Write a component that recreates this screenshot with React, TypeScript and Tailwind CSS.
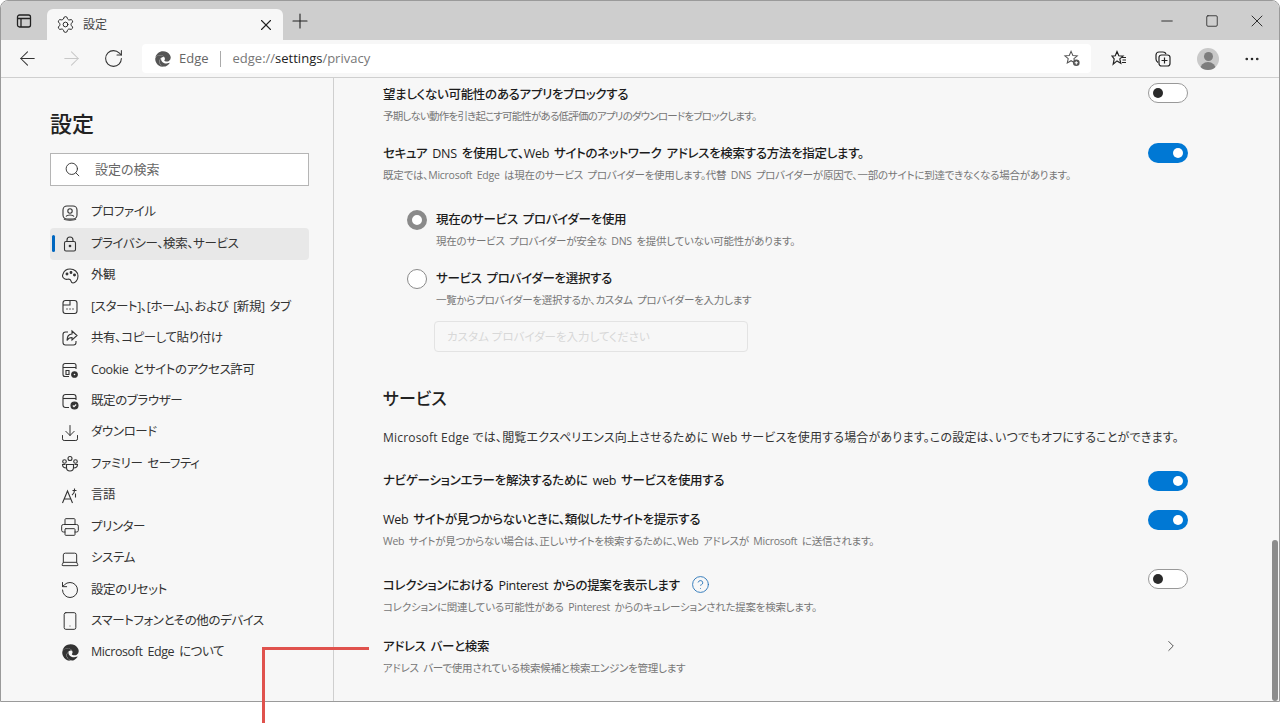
import type { ReactNode } from "react";
import {
  ArrowLeft,
  ArrowRight,
  ChevronRight,
  CircleHelp,
  Download,
  Laptop,
  Minus,
  MoreHorizontal,
  Plus,
  Printer,
  RotateCcw,
  RotateCw,
  Search,
  Settings,
  Smartphone,
  Square,
  X,
} from "lucide-react";
import { FaEdge } from "react-icons/fa";

const icon = "w-5 h-5 text-[#333]";

function Svg({ children, className = icon }: { children: ReactNode; className?: string }) {
  return (
    <svg viewBox="0 0 20 20" fill="none" stroke="currentColor" strokeWidth="1.1" className={className}>
      {children}
    </svg>
  );
}

const navItems: { label: string; icon: ReactNode; active?: boolean }[] = [
  {
    label: "プロファイル",
    icon: (
      <Svg>
        <rect x="3" y="3" width="14" height="13" rx="4" />
        <circle cx="10" cy="8" r="2.2" />
        <path d="M6 13.500c1-2 7-2 8 0M4 16c1 1.500 11 1.500 12 0" />
      </Svg>
    ),
  },
  {
    label: "プライバシー、検索、サービス",
    active: true,
    icon: (
      <Svg>
        <rect x="4.500" y="7.500" width="11" height="9.500" rx="1.500" />
        <path d="M7 7.500V6a3 3 0 0 1 6 0v1.500" />
        <circle cx="10" cy="12" r="0.8" fill="currentColor" />
      </Svg>
    ),
  },
  {
    label: "外観",
    icon: (
      <Svg>
        <path d="M10 3c4.500 0 8 3 8 7 0 4.500-3 7-5 7-2.500 0-1.500-2.500-3-3.500-1.500-1-3 .5-5-.5-2-1-3-3-2-5 1-3 4-5 7-5z" />
        <circle cx="7" cy="8" r="0.9" fill="currentColor" />
        <circle cx="11" cy="6.500" r="0.9" fill="currentColor" />
        <circle cx="14.500" cy="9" r="0.9" fill="currentColor" />
      </Svg>
    ),
  },
  {
    label: "[スタート]、[ホーム]、および [新規] タブ",
    icon: (
      <Svg>
        <rect x="3" y="3.500" width="14" height="13" rx="2.500" />
        <path d="M3 8h7V3.500" />
        <path d="M6.500 12h1M9.500 12h1M12.500 12h1" strokeWidth="1.400" />
      </Svg>
    ),
  },
  {
    label: "共有、コピーして貼り付け",
    icon: (
      <Svg>
        <path d="M8 4H5.500A2.500 2.500 0 0 0 3 6.500v8A2.500 2.500 0 0 0 5.500 17h8a2.500 2.500 0 0 0 2.500-2.500V13" />
        <path d="M12 3l5 4.500-5 4.500V9.500c-2.500 0-4 1-5 3 0-4 2-6.500 5-6.500z" />
      </Svg>
    ),
  },
  {
    label: "Cookie とサイトのアクセス許可",
    icon: (
      <Svg>
        <path d="M9 16.500H5A2 2 0 0 1 3 14.500v-9A2 2 0 0 1 5 3.500h9a2 2 0 0 1 2 2V9" />
        <path d="M3 7.500h13M6 10.500h3v4H6z" />
        <circle cx="14.500" cy="14.500" r="2.800" fill="currentColor" />
        <circle cx="14.500" cy="14.500" r="0.800" fill="#f7f7f7" stroke="none" />
      </Svg>
    ),
  },
  {
    label: "既定のブラウザー",
    icon: (
      <Svg>
        <path d="M9 16.500H5.500A2.500 2.500 0 0 1 3 14V6a2.500 2.500 0 0 1 2.500-2.500h8A2.500 2.500 0 0 1 16 6v3" />
        <path d="M3 7.500h13" />
        <circle cx="14.500" cy="14.500" r="3.500" fill="currentColor" />
        <path d="M12.800 14.500l1.200 1.200 2.200-2.200" stroke="#f7f7f7" />
      </Svg>
    ),
  },
  { label: "ダウンロード", icon: <Download className={icon} strokeWidth={1.2} /> },
  {
    label: "ファミリー セーフティ",
    icon: (
      <Svg>
        <circle cx="10" cy="4.500" r="2" />
        <circle cx="4.500" cy="7.500" r="1.800" />
        <circle cx="15.500" cy="7.500" r="1.800" />
        <path d="M6.500 10.500h7v3a3.500 3.500 0 0 1-7 0z" />
        <path d="M5.500 10.500H2.500c0 2 1 3.500 4 3.500M14.500 10.500h3c0 2-1 3.500-4 3.500" />
      </Svg>
    ),
  },
  {
    label: "言語",
    icon: (
      <Svg>
        <path d="M2.500 17L7.500 5l5 12M4.300 13h6.400" />
        <path d="M12.500 4.500h4M14.500 2.500v2c0 2-1 3.500-2.500 4.500M15.500 7.500v4" />
      </Svg>
    ),
  },
  { label: "プリンター", icon: <Printer className={icon} strokeWidth={1.2} /> },
  { label: "システム", icon: <Laptop className={icon} strokeWidth={1.2} /> },
  { label: "設定のリセット", icon: <RotateCcw className={icon} strokeWidth={1.2} /> },
  { label: "スマートフォンとその他のデバイス", icon: <Smartphone className={icon} strokeWidth={1.2} /> },
  { label: "Microsoft Edge について", icon: <FaEdge className="w-[17px] h-[17px] text-[#333]" /> },
];

function Toggle({ on, className = "" }: { on?: boolean; className?: string }) {
  if (on) {
    return (
      <div className={`w-10 h-5 rounded-full bg-[#0078d4] flex items-center justify-end pr-[5px] shrink-0 ${className}`}>
        <div className="w-[10px] h-[10px] rounded-full bg-white" />
      </div>
    );
  }
  return (
    <div className={`w-10 h-5 rounded-full bg-white border border-[#999] flex items-center pl-1 shrink-0 ${className}`}>
      <div className="w-[10px] h-[10px] rounded-full bg-[#2a2a2a]" />
    </div>
  );
}

function Title({ children }: { children: ReactNode }) {
  return (
    <div className="text-[12.5px] leading-5 tracking-[-0.3px] [word-spacing:2px] font-medium text-[#1c1c1c] whitespace-nowrap">
      {children}
    </div>
  );
}

function Desc({ children }: { children: ReactNode }) {
  return (
    <div className="text-[10.5px] leading-4 tracking-[-0.25px] [word-spacing:2px] text-[#767676] whitespace-nowrap">
      {children}
    </div>
  );
}

function Row({ title, desc, right, className }: { title: ReactNode; desc?: ReactNode; right?: ReactNode; className: string }) {
  return (
    <div className={`flex justify-between pr-[91px] ${className}`}>
      <div className="flex flex-col gap-[3px] min-w-0">
        <Title>{title}</Title>
        {desc && <Desc>{desc}</Desc>}
      </div>
      {right}
    </div>
  );
}

export default function App() {
  return (
    <div className="relative w-[1280px] h-[723px] overflow-hidden bg-white font-['Open_Sans','Noto_Sans_CJK_JP',sans-serif] [font-feature-settings:'palt']">
      <div className="h-[702px] flex flex-col rounded-t-lg border border-[#9a9a9a] overflow-hidden bg-[#f7f7f7]">
        {/* tab strip */}
        <div className="h-[39px] shrink-0 bg-[#cecece] flex items-end">
          <div className="w-[46px] h-full flex items-center justify-center">
            <svg viewBox="0 0 16 16" fill="none" stroke="#222" strokeWidth="1.300" className="w-4 h-4">
              <rect x="1.500" y="2" width="13" height="12" rx="2" />
              <path d="M1.500 5.500h13M5 5.500V14" />
            </svg>
          </div>
          <div className="w-[236px] h-[31px] bg-[#f7f7f7] rounded-t-md flex items-center pl-[9px] pr-[8px]">
            <Settings className="w-[19px] h-[19px] text-[#222]" strokeWidth={1.200} />
            <span className="ml-[8px] text-xs text-[#444]">設定</span>
            <X className="ml-auto w-[18px] h-[18px] text-[#222]" strokeWidth={1.500} />
          </div>
          <div className="w-[34px] h-full flex items-center justify-center">
            <Plus className="w-6 h-6 text-[#222]" strokeWidth={1.100} />
          </div>
          <div className="ml-auto h-full flex items-center">
            <div className="w-[45px] flex justify-center">
              <Minus className="w-[18px] h-[18px] text-[#222]" strokeWidth={1.200} />
            </div>
            <div className="w-[45px] flex justify-center">
              <Square className="w-[14px] h-[14px] text-[#222]" strokeWidth={1.400} />
            </div>
            <div className="w-[45px] flex justify-center">
              <X className="w-5 h-5 text-[#222]" strokeWidth={1.100} />
            </div>
          </div>
        </div>

        {/* toolbar */}
        <div className="h-[38px] shrink-0 bg-[#f7f7f7] border-b border-[#cfcfcf] flex items-center">
          <div className="w-[141px] flex items-center justify-between pl-[15px] pr-[18px] shrink-0">
            <ArrowLeft className="w-[23px] h-[23px] text-[#333]" strokeWidth={1.100} />
            <ArrowRight className="w-[23px] h-[23px] text-[#c8c8c8]" strokeWidth={1.100} />
            <RotateCw className="w-[21px] h-[21px] text-[#333]" strokeWidth={1.200} />
          </div>
          <div className="w-[949px] h-[29px] rounded bg-white flex items-center pl-[13px] pr-[9px] shrink-0">
            <FaEdge className="w-4 h-4 text-[#555]" />
            <span className="ml-2 text-[13px] text-[#666]">Edge</span>
            <span className="ml-[11px] mr-[12px] w-px h-4 bg-[#aaa]" />
            <span className="text-[13px] text-[#777]">
              edge://<span className="text-[#222]">settings</span>/privacy
            </span>
            <svg viewBox="0 0 20 20" fill="none" stroke="#555" strokeWidth="1.100" className="ml-auto w-[19px] h-[19px]">
              <path d="M8.500 2.500l1.900 4.300 4.600.4-3.500 3 1 4.500-4-2.400-4 2.400 1-4.500-3.500-3 4.600-.4z" />
              <circle cx="14" cy="14.500" r="3.500" fill="#555" stroke="none" />
              <path d="M12.300 14.500h3.400M14 12.800v3.400" stroke="#fff" />
            </svg>
          </div>
          <div className="flex-1 flex items-center gap-6 pl-[18px]">
            <svg viewBox="0 0 20 20" fill="none" stroke="#222" strokeWidth="1.200" className="w-5 h-5">
              <path d="M8 2.500l1.800 4.300 4.200.3-3.200 2.800 1 4.300-3.800-2.300-3.800 3.300 1-5.300L3 7.100l3.300-.3z" />
              <path d="M13 8.500h4M13.500 11h3.500M13 13.500h4" />
            </svg>
            <svg viewBox="0 0 20 20" fill="none" stroke="#222" strokeWidth="1.200" className="w-5 h-5">
              <path d="M5 13.500C3.500 12.500 3 11.500 3 10V6a3 3 0 0 1 3-3h4c1.500 0 2.500.5 3 2" />
              <rect x="6" y="6" width="11" height="11" rx="2.500" />
              <path d="M11.500 8.500v6M8.500 11.500h6" />
            </svg>
            <div className="w-[22px] h-[22px] rounded-full bg-[#c9c9c9] overflow-hidden flex flex-col items-center pt-1">
              <div className="w-[9px] h-[9px] rounded-full bg-[#7d7d7d] shrink-0" />
              <div className="w-[16px] h-3 mt-[1px] rounded-t-full bg-[#7d7d7d] shrink-0" />
            </div>
            <MoreHorizontal className="w-[18px] h-[18px] text-[#222]" strokeWidth={1.500} />
          </div>
        </div>

        <div className="flex-1 flex min-h-0">
          {/* sidebar */}
          <aside className="w-[333px] h-full shrink-0 border-r border-[#cfcfcf] pl-[49px] pr-6">
            <h1 className="mt-[29px] text-[22px] leading-8 font-medium text-[#222]">設定</h1>
            <div className="mt-[14px] h-[33px] w-[259px] border border-[#b5b5b5] bg-white flex items-center pl-[13px]">
              <Search className="w-[17px] h-[17px] text-[#333]" strokeWidth={1.300} />
              <span className="ml-[14px] text-[13px] leading-[17px] -mt-[1px] text-[#666]">設定の検索</span>
            </div>
            <nav className="mt-[11px] flex flex-col">
              {navItems.map((item) => (
                <div
                  key={item.label}
                  className={`relative h-[31.450px] w-[259px] flex items-center pl-[10px] rounded-sm ${item.active ? "bg-[#e8e8e8]" : ""}`}
                >
                  {item.active && <div className="absolute left-[2px] top-[7px] w-[3px] h-[17px] bg-[#0067c0] rounded-sm" />}
                  <span className="w-5 flex justify-center">{item.icon}</span>
                  <span className="ml-[11px] text-[12.5px] tracking-[-0.4px] [word-spacing:2px] text-[#333] whitespace-nowrap">
                    {item.label}
                  </span>
                </div>
              ))}
            </nav>
          </aside>

          {/* main */}
          <main className="relative flex-1 min-w-0 pl-[49px]">
            <Row
              className="mt-[7px]"
              title="望ましくない可能性のあるアプリをブロックする"
              desc={
                <span className="tracking-[-0.8px]">
                  予期しない動作を引き起こす可能性がある低評価のアプリのダウンロードをブロックします。
                </span>
              }
              right={<Toggle className="-mt-[2px]" />}
            />
            <Row
              className="mt-[20px]"
              title="セキュア DNS を使用して、Web サイトのネットワーク アドレスを検索する方法を指定します。"
              desc="既定では、Microsoft Edge は現在のサービス プロバイダーを使用します。代替 DNS プロバイダーが原因で、一部のサイトに到達できなくなる場合があります。"
              right={<Toggle on className="-mt-[1px]" />}
            />

            <div className="mt-[27px] pl-[24px] flex gap-[9px]">
              <div className="w-5 h-5 rounded-full border-[5px] border-[#8a8a8a] bg-white shrink-0" />
              <div className="flex flex-col gap-[3px]">
                <Title>現在のサービス プロバイダーを使用</Title>
                <Desc>現在のサービス プロバイダーが安全な DNS を提供していない可能性があります。</Desc>
              </div>
            </div>
            <div className="mt-[20px] pl-[24px] flex gap-[9px]">
              <div className="w-5 h-5 rounded-full border border-[#8a8a8a] bg-white shrink-0" />
              <div className="flex flex-col gap-[3px]">
                <Title>サービス プロバイダーを選択する</Title>
                <Desc>一覧からプロバイダーを選択するか、カスタム プロバイダーを入力します</Desc>
                <div className="mt-[10px] -ml-[2px] w-[314px] h-[31px] border border-[#e3e3e3] rounded-sm flex items-center pl-3 text-[11.5px] text-[#d8d8d8]">
                  カスタム プロバイダーを入力してください
                </div>
              </div>
            </div>

            <h2 className="mt-[35px] text-[17px] leading-6 font-medium text-[#222]">サービス</h2>
            <p className="mt-[17px] text-xs leading-5 tracking-[0.2px] text-[#333] whitespace-nowrap">
              Microsoft Edge では、閲覧エクスペリエンス向上させるために Web サービスを使用する場合があります。この設定は、いつでもオフにすることができます。
            </p>

            <Row className="mt-[23px]" title="ナビゲーションエラーを解決するために web サービスを使用する" right={<Toggle on />} />
            <Row
              className="mt-[19px]"
              title="Web サイトが見つからないときに、類似したサイトを提示する"
              desc="Web サイトが見つからない場合は、正しいサイトを検索するために、Web アドレスが Microsoft に送信されます。"
              right={<Toggle on />}
            />
            <Row
              className="mt-[27px]"
              title={
                <span className="flex items-center">
                  コレクションにおける Pinterest からの提案を表示します
                  <CircleHelp className="ml-[11px] -mt-1 w-[19px] h-[19px] text-[#1f6fb5]" strokeWidth={1.100} />
                </span>
              }
              desc="コレクションに関連している可能性がある Pinterest からのキュレーションされた提案を検索します。"
              right={<Toggle className="-mt-[7px]" />}
            />
            <div className="mt-[22px] flex justify-between pr-[99px]">
              <div className="flex flex-col gap-[3px]">
                <Title>アドレス バーと検索</Title>
                <Desc>アドレス バーで使用されている検索候補と検索エンジンを管理します</Desc>
              </div>
              <ChevronRight className="w-[18px] h-[18px] text-[#444]" strokeWidth={1.200} />
            </div>

            {/* scrollbar thumb */}
            <div className="absolute right-[1px] top-[462px] bottom-0 w-[6px] rounded-full bg-[#8c8c8c]" />
          </main>
        </div>
      </div>

      {/* annotation line */}
      <div className="absolute left-[262px] top-[647px] w-[107px] h-[3px] bg-[#e0524d]" />
      <div className="absolute left-[262px] top-[647px] w-[3px] h-[76px] bg-[#e0524d]" />
    </div>
  );
}
